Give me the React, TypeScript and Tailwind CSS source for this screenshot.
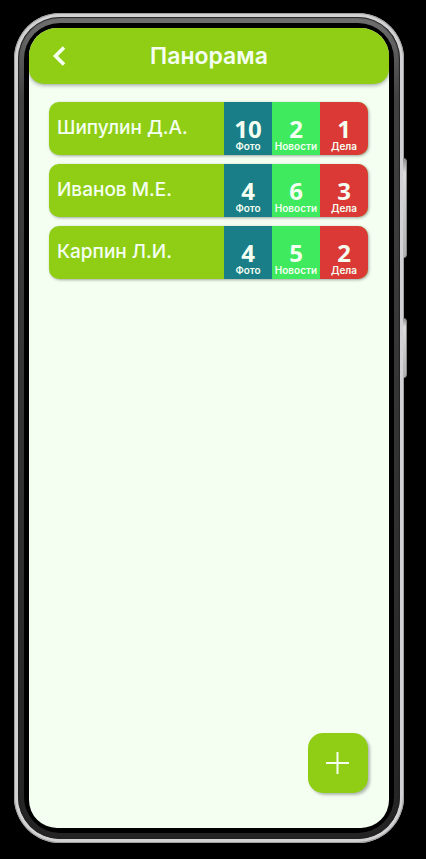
import React from "react";

type Person = { name: string; photos: number; news: number; tasks: number };

const people: Person[] = [
  { name: "Шипулин Д.А.", photos: 10, news: 2, tasks: 1 },
  { name: "Иванов М.Е.", photos: 4, news: 6, tasks: 3 },
  { name: "Карпин Л.И.", photos: 4, news: 5, tasks: 2 },
];

function Stat({ value, label, color }: { value: number; label: string; color: string }) {
  return (
    <span className={`flex w-12 shrink-0 flex-col items-center justify-end pb-[3px] ${color}`}>
      <span className="font-['Open_Sans','Noto_Sans',sans-serif] text-2xl leading-[22px] font-bold">{value}</span>
      <span className="text-[10px] leading-3 font-semibold">{label}</span>
    </span>
  );
}

function PersonRow({ person }: { person: Person }) {
  return (
    <li>
      <button
        type="button"
        className="flex h-[53px] w-full overflow-hidden rounded-[10px] bg-[#90ce15] text-left shadow-[1px_1px_3px_rgba(0,0,0,0.35)]"
      >
        <span className="flex min-w-0 flex-1 items-center self-stretch pb-px pl-2 text-[19px] font-medium whitespace-nowrap">
          {person.name}
        </span>
        <span className="flex self-stretch">
          <Stat value={person.photos} label="Фото" color="bg-[#197e88]" />
          <Stat value={person.news} label="Новости" color="bg-[#3fea5e]" />
          <Stat value={person.tasks} label="Дела" color="bg-[#db3935]" />
        </span>
      </button>
    </li>
  );
}

export default function App() {
  return (
    <div className="flex min-h-screen bg-black pt-[13px] pr-[22px] pb-4 pl-3.5 font-['Inter','Open_Sans',sans-serif] text-[#f4fff2]">
      <div className="relative flex flex-1 rounded-[46px] bg-[#d2d2d4] p-1 shadow-[inset_0_0_0_1px_#a0a0a0]">
        <span className="absolute top-[145px] -right-[3px] h-[100px] w-1 rounded-r-sm border-r border-[#888] bg-linear-to-b from-[#8c8c8c] via-[#dddddd] via-15% to-[#b0b0b0]" />
        <span className="absolute top-[305px] -right-[3px] h-[60px] w-1 rounded-r-sm border-r border-[#888] bg-linear-to-b from-[#8c8c8c] via-[#dddddd] via-15% to-[#b0b0b0]" />
        <div className="flex flex-1 rounded-[42px] bg-linear-to-b from-[#707070] via-[#414141] via-10% to-[#242424] p-1.5 shadow-[inset_0_0_1px_1px_#222]">
          <div className="flex flex-1 rounded-[36px] bg-black p-[5px]">
            <main className="flex min-w-0 flex-1 flex-col overflow-hidden rounded-[28px] bg-[#f4fff2]">
              <header className="grid h-14 shrink-0 grid-cols-[60px_1fr_60px] items-center rounded-b-[15px] bg-[#90ce15] shadow-[0_1px_4px_rgba(0,0,0,0.4)]">
                <button type="button" aria-label="Назад" className="flex h-full items-center justify-center">
                  <svg width="14" height="20" viewBox="0 0 14 20" fill="none" stroke="currentColor" strokeWidth="3.6">
                    <path d="M12 1.5 3.5 10l8.5 8.5" />
                  </svg>
                </button>
                <h1 className="text-center text-[23px] font-semibold">Панорама</h1>
              </header>
              <ul className="flex flex-1 flex-col gap-[9px] pt-[18px] pr-[21px] pl-5">
                {people.map((person) => (
                  <PersonRow key={person.name} person={person} />
                ))}
              </ul>
              <div className="flex justify-end pr-[21px] pb-[35px]">
                <button
                  type="button"
                  aria-label="Добавить"
                  className="flex size-[60px] items-center justify-center rounded-[15px] bg-[#90ce15] shadow-[2px_2px_3px_rgba(0,0,0,0.28)]"
                >
                  <svg width="24" height="24" viewBox="0 0 24 24" fill="none" stroke="currentColor" strokeWidth="2">
                    <path d="M0 12h23M11.5 1v22" />
                  </svg>
                </button>
              </div>
            </main>
          </div>
        </div>
      </div>
    </div>
  );
}
